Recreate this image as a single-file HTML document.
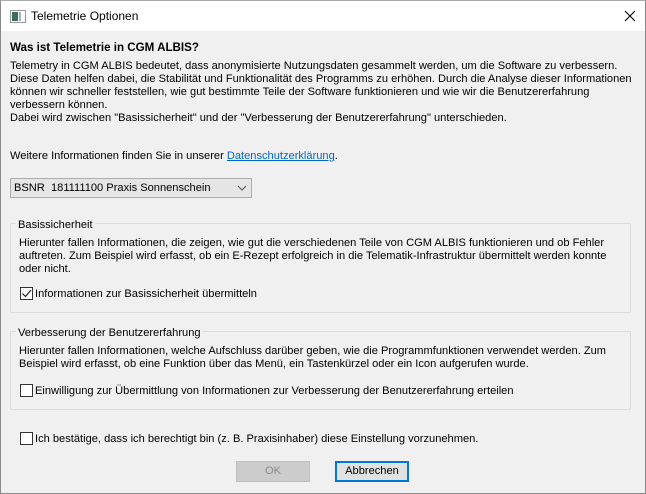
<!DOCTYPE html>
<html><head><meta charset="utf-8"><style>
*{margin:0;padding:0;box-sizing:border-box}
body{width:646px;height:494px;background:#f0f0f0;font-family:"Liberation Sans",sans-serif;font-size:11.1px;color:#000;position:relative;overflow:hidden}
.win{position:absolute;left:0;top:0;width:646px;height:494px;border:1px solid #8a8a8a;border-top:1px solid #aaa}
.title{position:absolute;left:1px;top:1px;width:644px;height:30px;background:#fff}
.t{position:absolute;white-space:nowrap;line-height:13px}
.grp{position:absolute;border:1px solid #dcdcdc;left:10px;width:621px}
.lbl{position:absolute;background:#f0f0f0;padding:0 2px;white-space:nowrap}
.cb{position:absolute;width:13px;height:13px;border:1px solid #333;background:#fff}
.btn{position:absolute;height:21px;width:74px;text-align:center;line-height:19px}
a{color:#0066cc;text-decoration:underline}
</style></head><body>
<div class="win"></div>
<div class="title">
 <svg style="position:absolute;left:9px;top:9px" width="16" height="13"><rect x="0.5" y="0.5" width="15" height="12" fill="#fff" stroke="#999"/><rect x="2" y="2" width="6" height="9" fill="#3c6e5a"/><rect x="9" y="2" width="2" height="9" fill="#aac"/></svg>
 <div class="t" style="left:30px;top:9px;font-size:12px">Telemetrie Optionen</div>
 <svg style="position:absolute;left:623px;top:9px" width="12" height="12"><path d="M1 1L11 11M11 1L1 11" stroke="#000" stroke-width="1.1"/></svg>
</div>
<div class="t" style="left:10px;top:41px;font-weight:bold;font-size:11.6px">Was ist Telemetrie in CGM ALBIS?</div>
<div class="t" style="left:10px;top:60px">Telemetry in CGM ALBIS bedeutet, dass anonymisierte Nutzungsdaten gesammelt werden, um die Software zu verbessern.</div>
<div class="t" style="left:10px;top:73px">Diese Daten helfen dabei, die Stabilität und Funktionalität des Programms zu erhöhen. Durch die Analyse dieser Informationen</div>
<div class="t" style="left:10px;top:86px">können wir schneller feststellen, wie gut bestimmte Teile der Software funktionieren und wie wir die Benutzererfahrung</div>
<div class="t" style="left:10px;top:99px">verbessern können.</div>
<div class="t" style="left:10px;top:112px">Dabei wird zwischen "Basissicherheit" und der "Verbesserung der Benutzererfahrung" unterschieden.</div>
<div class="t" style="left:10px;top:150px">Weitere Informationen finden Sie in unserer <a>Datenschutzerklärung</a>.</div>
<div style="position:absolute;left:10px;top:178px;width:242px;height:20px;background:#e5e5e5;border:1px solid #adadad"></div>
<div class="t" style="left:14px;top:182px">BSNR&nbsp; 181111100 Praxis Sonnenschein</div>
<svg style="position:absolute;left:237px;top:185px" width="10" height="6"><path d="M1 1L5 5L9 1" fill="none" stroke="#555"/></svg>

<div class="grp" style="top:223px;height:90px"></div>
<div class="lbl t" style="left:16px;top:219px">Basissicherheit</div>
<div class="t" style="left:19px;top:237px">Hierunter fallen Informationen, die zeigen, wie gut die verschiedenen Teile von CGM ALBIS funktionieren und ob Fehler</div>
<div class="t" style="left:19px;top:250px">auftreten. Zum Beispiel wird erfasst, ob ein E-Rezept erfolgreich in die Telematik-Infrastruktur übermittelt werden konnte</div>
<div class="t" style="left:19px;top:263px">oder nicht.</div>
<div class="cb" style="left:20px;top:287px"><svg width="11" height="11" style="position:absolute;left:0;top:0"><path d="M1.5 5.5L4.5 8.5L10 2" fill="none" stroke="#222" stroke-width="1.2"/></svg></div>
<div class="t" style="left:35px;top:288px">Informationen zur Basissicherheit übermitteln</div>

<div class="grp" style="top:331px;height:79px"></div>
<div class="lbl t" style="left:16px;top:327px">Verbesserung der Benutzererfahrung</div>
<div class="t" style="left:19px;top:345px">Hierunter fallen Informationen, welche Aufschluss darüber geben, wie die Programmfunktionen verwendet werden. Zum</div>
<div class="t" style="left:19px;top:358px">Beispiel wird erfasst, ob eine Funktion über das Menü, ein Tastenkürzel oder ein Icon aufgerufen wurde.</div>
<div class="cb" style="left:20px;top:384px"></div>
<div class="t" style="left:35px;top:385px">Einwilligung zur Übermittlung von Informationen zur Verbesserung der Benutzererfahrung erteilen</div>

<div class="cb" style="left:20px;top:432px"></div>
<div class="t" style="left:35px;top:433px">Ich bestätige, dass ich berechtigt bin (z. B. Praxisinhaber) diese Einstellung vorzunehmen.</div>

<div class="btn" style="left:236px;top:461px;background:#cccccc;border:1px solid #bfbfbf;color:#8a8a8a">OK</div>
<div class="btn" style="left:335px;top:461px;background:#e1e1e1;border:2px solid #0078d7;line-height:17px">Abbrechen</div>
</body></html>
